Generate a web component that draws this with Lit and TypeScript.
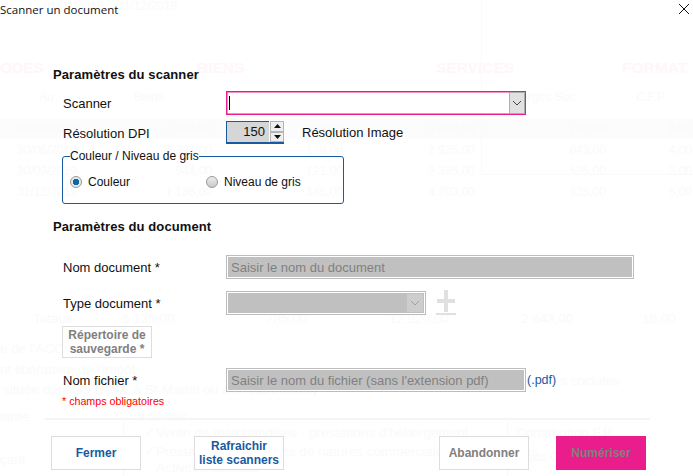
import { LitElement, html, css } from "lit";
import { customElement } from "lit/decorators.js";

type G = [string, number, number, string?];
// [text, x (negative = right edge), centre y, class]
const GHOST: G[] = [
  ["01/01/2019", 43, 6], ["31/12/2019", 117, 6],
  ["ODES", 0, 68, "h"], ["BIENS", 197, 68, "h"], ["SERVICES", 436, 68, "h"], ["FORMAT.", 622, 68, "h"],
  ["Au", 39, 97], ["Biens", 134, 97], ["Charges Soc.", 243, 97], ["Services", 389, 97], ["Charges Soc.", 506, 97], ["C.F.P.", 636, 97],
  ["31/03/2019", 17, 129], ["2 664,00", -212, 129], ["341,00", -343, 129], ["3 407,00", -475, 129], ["750,00", -606, 129], ["6,00", -692, 129],
  ["30/06/2019", 17, 150], ["1 391,00", -212, 150], ["178,00", -343, 150], ["2 925,00", -475, 150], ["643,00", -606, 150], ["4,00", -692, 150],
  ["30/09/2019", 17, 171], ["944,00", -212, 171], ["121,00", -343, 171], ["2 385,00", -475, 171], ["525,00", -606, 171], ["3,00", -692, 171],
  ["31/12/2019", 17, 192], ["1 136,00", -212, 192], ["145,00", -343, 192], ["4 203,00", -475, 192], ["925,00", -606, 192], ["5,00", -692, 192],
  ["Totaux", 33, 319, "b"], ["6 135,00", 122, 319, "b"], ["785,00", 266, 319, "b"], ["12 920,00", 389, 319, "b"], ["2 843,00", 521, 319, "b"], ["18,00", 642, 319, "b"],
  ["e de l'ACCRE", 0, 349, "b"], ["nt libératoire de l'impôt", 0, 370, "b"], ["située dans un DOM, à St-Martin ou à St Barthélemy", 3, 390, "b"],
  ["Charges sociales", 516, 381, "b"], ["larée", 0, 417, "b"], ["Activités", 137, 417, "b"],
  ["✓", 144, 433, "b"], ["Vente de marchandises - prestations d'hébergement", 156, 433, "b"], ["Contribution F.P.", 516, 433, "b"],
  ["✓", 144, 452, "b"], ["Prestations de services de natures commerciales ou artisanales", 156, 452, "b"],
  ["Frais Chambre", 516, 457, "b"], ["çant", 0, 460, "b"], ["Activités libérales", 156, 468, "b"],
];

@customElement("app-root")
export class AppRoot extends LitElement {
  static styles = css`
    :host {
      display: block;
      position: relative;
      width: 693px;
      height: 476px;
      overflow: hidden;
      background: #fff;
      font-family: "Liberation Sans", Arial, sans-serif;
      font-size: 13px;
      color: #111;
    }
    .ghost { position: absolute; inset: 0; }
    .ghost span { position: absolute; white-space: nowrap; font-size: 12px; line-height: 16px; color: #fafafa; }
    .ghost span.b { font-size: 13.5px; }
    .ghost span.h { font-size: 15.5px; font-weight: bold; line-height: 20px; color: #fff6f9; }
    .band { position: absolute; left: 0; right: 0; top: 119px; height: 20px; background: #fcfcfc; }
    .hl { position: absolute; left: 45px; width: 605px; top: 418px; height: 2px; background: #f4f4f4; }
    .vl1 { position: absolute; left: 123px; top: 418px; bottom: 0; width: 1px; background: #f8f8f8; }
    .vl2 { position: absolute; left: 507px; top: 418px; bottom: 0; width: 1px; background: #f8f8f8; }
    .vl3 { position: absolute; left: 481px; top: 0; height: 174px; width: 1px; background: #fafafa; }
    .hl2 { position: absolute; left: 481px; right: 0; top: 174px; height: 1px; background: #fafafa; }

    .dialog { position: relative; display: flex; flex-direction: column; height: 476px; }
    .titlebar { display: flex; justify-content: space-between; align-items: center; height: 18px; }
    .title { font-family: "Open Sans", sans-serif; font-size: 11.5px; color: #111; }
    .close { display: block; margin-right: 4px; }
    h2 { margin: 0 0 0 53px; font-size: 13px; line-height: 16px; font-weight: bold; letter-spacing: 0.1px; }
    h2.one { margin-top: 49px; }
    h2.two { margin-top: 15px; }
    .row { display: grid; grid-template-columns: 163px auto; align-items: center; padding-left: 63px; height: 24px; }
    .row.scanner { margin-top: 8px; }
    .row.dpi { margin-top: 6px; }
    .row.nom { margin-top: 20px; }
    .row.type { margin-top: 11px; }
    .row.fichier { margin-top: 10px; }

    .select { display: flex; box-sizing: border-box; width: 300px; height: 24px; border: 1px solid #e91e8c; box-shadow: inset 0 0 0 0.5px #e91e8c; background: #fff; align-items: stretch; }
    .caret { width: 1px; height: 14px; margin: 4px 0 0 2px; background: #000; }
    .arrow { display: flex; align-items: center; justify-content: center; box-sizing: border-box; width: 16px; margin-left: auto; background: #e1e1e1; border: 1.5px solid #adadad; }

    .spin-row { display: flex; align-items: flex-start; height: 24px; }
    .spin { display: flex; box-sizing: border-box; width: 58px; height: 23px; border-bottom: 2px solid #1a5aa0; }
    .spin-value { box-sizing: border-box; width: 43px; background: #d6d6d6; border-left: 1px solid #1a5aa0; border-top: 1px solid #1a5aa0; text-align: right; padding-right: 4px; line-height: 20px; font-size: 13px; }
    .spin-btns { display: flex; flex-direction: column; width: 14px; margin-left: 1px; }
    .spin-btn { flex: 1; box-sizing: border-box; display: flex; align-items: center; justify-content: center; background: #efefef; border: 1px solid #b5b5b5; }
    .res-img { margin-left: 18px; line-height: 24px; }

    fieldset { box-sizing: border-box; margin: 4px 0 0 62px; padding: 0 0 0 7px; width: 282px; height: 55px; border: 1px solid #1a5aa0; border-radius: 3px; }
    legend { padding: 0; margin-left: 0; font-size: 12px; line-height: 14px; }
    .radios { display: grid; grid-template-columns: 136px auto; margin-top: 12px; font-size: 12px; }
    .radio-opt { display: flex; align-items: center; gap: 6px; height: 14px; }
    .radio { box-sizing: border-box; width: 12px; height: 12px; border-radius: 50%; border: 1px solid #9a9a9a; background: linear-gradient(#ececec, #c9c9c9); }
    .radio.on { background: radial-gradient(circle, #0a6aa8 0 3px, #e8e8e8 3.5px); }

    input { display: block; box-sizing: border-box; height: 24px; border: 1px solid #bcbcbc; box-shadow: inset 0 0 0 1px #fff; background: #c0c0c0; padding: 0 0 0 4px; font: 13px "Liberation Sans", Arial, sans-serif; outline: none; }
    input::placeholder { color: #808080; opacity: 1; }
    input.wide { width: 408px; }
    input.mid { width: 300px; }
    .doc-type { display: flex; align-items: center; }
    .type-select { display: flex; justify-content: flex-end; box-sizing: border-box; width: 200px; height: 24px; border: 1px solid #bcbcbc; box-shadow: inset 0 0 0 1px #fff; background: #c0c0c0; padding: 2px; }
    .type-arrow { display: flex; align-items: center; justify-content: center; width: 16px; background: #cdcdcd; }
    .plus { display: block; margin-left: 10px; }

    .btn { box-sizing: border-box; background: #fff; font: bold 12px/14px "Liberation Sans", Arial, sans-serif; text-align: center; padding: 0; }
    .repertoire { display: block; margin: 12px 0 0 62px; width: 90px; height: 32px; border: 1px solid #ddd; color: #808080; }
    .fichier-wrap { display: flex; align-items: center; }
    .ext { color: #1a5aa0; margin-left: 1px; font-size: 12.5px; }
    .req { margin: 3px 0 0 62px; font-size: 10.7px; line-height: 12px; color: #f00; }

    .footer { display: flex; justify-content: space-between; margin-top: 29px; padding: 0 47px 0 51px; }
    .group { display: flex; }
    .group.left { gap: 53px; }
    .group.right { gap: 27px; }
    .footer .btn { width: 90px; height: 34px; border: 1px solid #ddd; color: #1a5aa0; }
    .footer .abort { color: #808080; }
    .footer .scan { background: #e91e8c; border-color: #e91e8c; color: #808080; }
  `;

  render() {
    return html`
      <div class="ghost" aria-hidden="true">
        <div class="band"></div><div class="hl"></div><div class="vl1"></div><div class="vl2"></div><div class="vl3"></div><div class="hl2"></div>
        ${GHOST.map(([t, x, y, c]) => {
          const h = c === "h" ? 10 : 8;
          const pos = x < 0 ? `right:${693 + x}px` : `left:${x}px`;
          return html`<span class=${c ?? ""} style="${pos};top:${y - h}px">${t}</span>`;
        })}
      </div>
      <div class="dialog">
        <div class="titlebar">
          <span class="title">Scanner un document</span>
          <svg class="close" width="10" height="10" viewBox="0 0 10 10"><path d="M0 0L10 10M10 0L0 10" stroke="#111" stroke-width="1" fill="none"/></svg>
        </div>
        <h2 class="one">Paramètres du scanner</h2>
        <div class="row scanner">
          <span>Scanner</span>
          <div class="select">
            <span class="caret"></span>
            <span class="arrow"><svg width="10" height="6" viewBox="0 0 10 6"><path d="M1 1L5 5L9 1" stroke="#444" stroke-width="1" fill="none"/></svg></span>
          </div>
        </div>
        <div class="row dpi">
          <span>Résolution DPI</span>
          <div class="spin-row">
            <div class="spin">
              <div class="spin-value">150</div>
              <div class="spin-btns">
                <span class="spin-btn"><svg width="7" height="4" viewBox="0 0 7 4"><path d="M3.5 0L7 4H0Z" fill="#111"/></svg></span>
                <span class="spin-btn"><svg width="7" height="4" viewBox="0 0 7 4"><path d="M0 0H7L3.5 4Z" fill="#111"/></svg></span>
              </div>
            </div>
            <span class="res-img">Résolution Image</span>
          </div>
        </div>
        <fieldset>
          <legend>Couleur / Niveau de gris</legend>
          <div class="radios">
            <label class="radio-opt"><span class="radio on"></span>Couleur</label>
            <label class="radio-opt"><span class="radio"></span>Niveau de gris</label>
          </div>
        </fieldset>
        <h2 class="two">Paramètres du document</h2>
        <div class="row nom">
          <span>Nom document *</span>
          <input class="wide" disabled placeholder="Saisir le nom du document" />
        </div>
        <div class="row type">
          <span>Type document *</span>
          <div class="doc-type">
            <div class="type-select"><span class="type-arrow"><svg width="10" height="6" viewBox="0 0 10 6"><path d="M1 1L5 5L9 1" stroke="#a0a0a0" stroke-width="1" fill="none"/></svg></span></div>
            <svg class="plus" width="20" height="26" viewBox="0 0 20 26"><path d="M8 0h4v9h7v4h-7v9H8v-9H1V9h7ZM0 23h20v2H0Z" fill="#e0e0e0"/></svg>
          </div>
        </div>
        <button class="btn repertoire">Répertoire de sauvegarde *</button>
        <div class="row fichier">
          <span>Nom fichier *</span>
          <div class="fichier-wrap">
            <input class="mid" disabled placeholder="Saisir le nom du fichier (sans l'extension pdf)" />
            <span class="ext">(.pdf)</span>
          </div>
        </div>
        <div class="req">* champs obligatoires</div>
        <div class="footer">
          <div class="group left">
            <button class="btn">Fermer</button>
            <button class="btn">Rafraichir<br />liste scanners</button>
          </div>
          <div class="group right">
            <button class="btn abort">Abandonner</button>
            <button class="btn scan">Numériser</button>
          </div>
        </div>
      </div>
    `;
  }
}
